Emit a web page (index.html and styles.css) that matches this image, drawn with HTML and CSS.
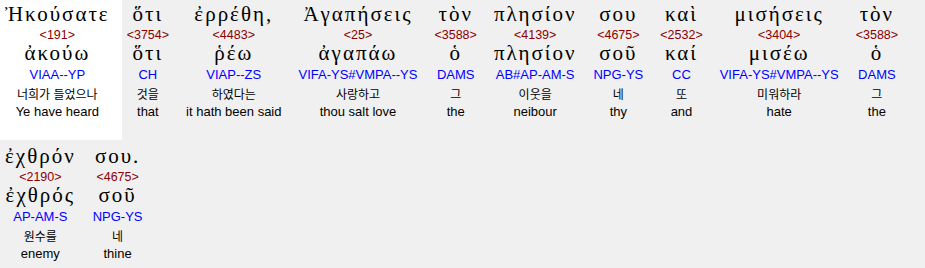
FILE: index.html
```html
<!DOCTYPE html>
<html lang="ko">
<head>
<meta charset="utf-8">
<title>Interlinear</title>
<link rel="stylesheet" href="styles.css">
</head>
<body>
<div class="verse">
  <div class="word sel">
    <div class="gk">Ἠκούσατε</div>
    <div class="num">&lt;191&gt;</div>
    <div class="lem">ἀκούω</div>
    <div class="morph">VIAA--YP</div>
    <div class="ko">너희가 들었으나</div>
    <div class="en">Ye have heard</div>
  </div>
  <div class="word">
    <div class="gk">ὅτι</div>
    <div class="num">&lt;3754&gt;</div>
    <div class="lem">ὅτι</div>
    <div class="morph">CH</div>
    <div class="ko">것을</div>
    <div class="en">that</div>
  </div>
  <div class="word">
    <div class="gk">ἐρρέθη,</div>
    <div class="num">&lt;4483&gt;</div>
    <div class="lem">ῥέω</div>
    <div class="morph">VIAP--ZS</div>
    <div class="ko">하였다는</div>
    <div class="en">it hath been said</div>
  </div>
  <div class="word">
    <div class="gk">Ἀγαπήσεις</div>
    <div class="num">&lt;25&gt;</div>
    <div class="lem">ἀγαπάω</div>
    <div class="morph">VIFA-YS#VMPA--YS</div>
    <div class="ko">사랑하고</div>
    <div class="en">thou salt love</div>
  </div>
  <div class="word">
    <div class="gk">τὸν</div>
    <div class="num">&lt;3588&gt;</div>
    <div class="lem">ὁ</div>
    <div class="morph">DAMS</div>
    <div class="ko">그</div>
    <div class="en">the</div>
  </div>
  <div class="word">
    <div class="gk">πλησίον</div>
    <div class="num">&lt;4139&gt;</div>
    <div class="lem">πλησίον</div>
    <div class="morph">AB#AP-AM-S</div>
    <div class="ko">이웃을</div>
    <div class="en">neibour</div>
  </div>
  <div class="word">
    <div class="gk">σου</div>
    <div class="num">&lt;4675&gt;</div>
    <div class="lem">σοῦ</div>
    <div class="morph">NPG-YS</div>
    <div class="ko">네</div>
    <div class="en">thy</div>
  </div>
  <div class="word">
    <div class="gk">καὶ</div>
    <div class="num">&lt;2532&gt;</div>
    <div class="lem">καί</div>
    <div class="morph">CC</div>
    <div class="ko">또</div>
    <div class="en">and</div>
  </div>
  <div class="word">
    <div class="gk">μισήσεις</div>
    <div class="num">&lt;3404&gt;</div>
    <div class="lem">μισέω</div>
    <div class="morph">VIFA-YS#VMPA--YS</div>
    <div class="ko">미워하라</div>
    <div class="en">hate</div>
  </div>
  <div class="word">
    <div class="gk">τὸν</div>
    <div class="num">&lt;3588&gt;</div>
    <div class="lem">ὁ</div>
    <div class="morph">DAMS</div>
    <div class="ko">그</div>
    <div class="en">the</div>
  </div>
  <div class="word">
    <div class="gk">ἐχθρόν</div>
    <div class="num">&lt;2190&gt;</div>
    <div class="lem">ἐχθρός</div>
    <div class="morph">AP-AM-S</div>
    <div class="ko">원수를</div>
    <div class="en">enemy</div>
  </div>
  <div class="word">
    <div class="gk">σου.</div>
    <div class="num">&lt;4675&gt;</div>
    <div class="lem">σοῦ</div>
    <div class="morph">NPG-YS</div>
    <div class="ko">네</div>
    <div class="en">thine</div>
  </div>
</div>
</body>
</html>
```

FILE: styles.css
```css
html, body {
  margin: 0;
  padding: 0;
  background: #f0f0f0;
}

.verse {
  display: flex;
  flex-wrap: wrap;
  align-items: flex-start;
  row-gap: 2px;
}

.word {
  padding: 0 12px 19px 5px;
  text-align: center;
  white-space: nowrap;
  color: #000;
}

.word.sel {
  background: #ffffff;
}

.gk, .lem {
  font-family: "Liberation Serif", "DejaVu Serif", serif;
  font-size: 21px;
  letter-spacing: 2px;
}

.gk {
  line-height: 28px;
}

.lem {
  line-height: 22px;
}

.num {
  font-family: "Liberation Sans", Arial, sans-serif;
  font-size: 12.5px;
  line-height: 14px;
  color: #8b0000;
}

.morph {
  font-family: "Liberation Sans", Arial, sans-serif;
  font-size: 13px;
  line-height: 22px;
  color: #0000ff;
}

.ko {
  font-family: "Noto Sans CJK KR", sans-serif;
  font-size: 12px;
  line-height: 16px;
}

.en {
  font-family: "Liberation Sans", Arial, sans-serif;
  font-size: 13px;
  line-height: 19px;
}
```
